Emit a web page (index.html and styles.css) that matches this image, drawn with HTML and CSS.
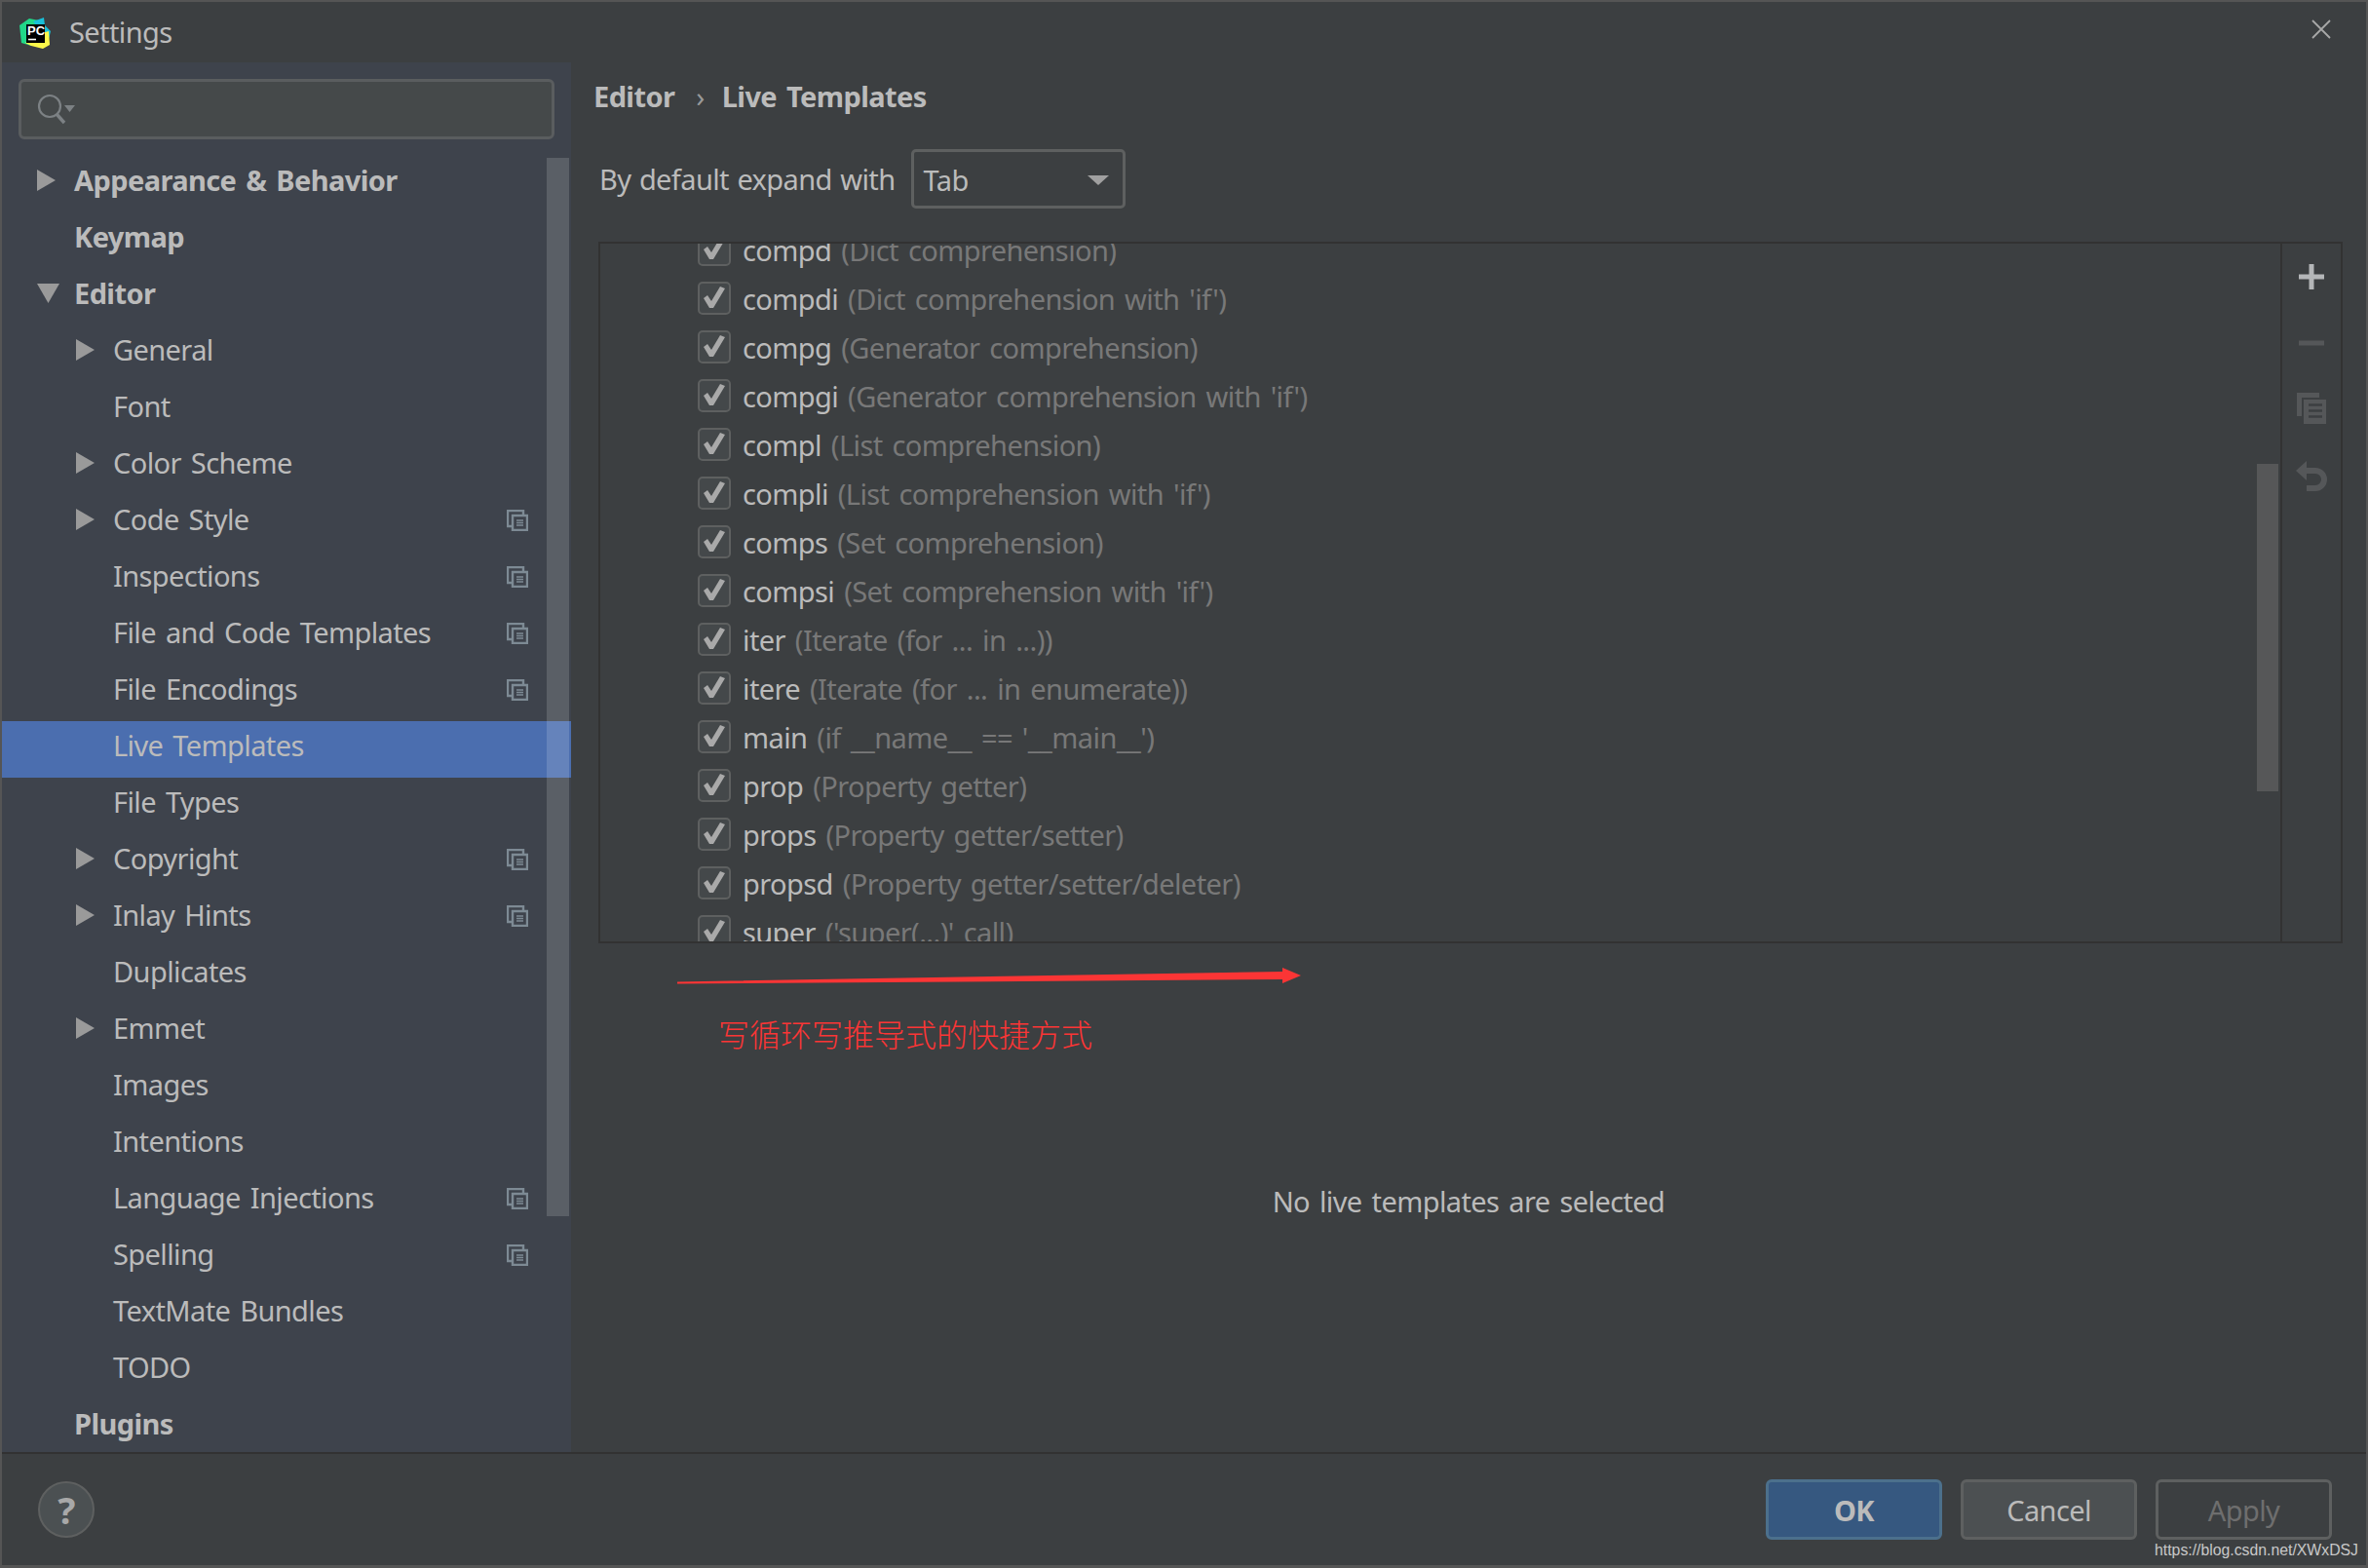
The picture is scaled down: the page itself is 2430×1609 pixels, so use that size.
FILE: index.html

```html
<!DOCTYPE html>
<html>
<head>
  <meta charset="UTF-8">
  <title>Settings</title>
  <link rel="stylesheet" href="styles.css">
</head>
<body>
  <svg class="defs" width="0" height="0">
    <symbol id="arrow-right" viewBox="0 0 19 22"><path d="M0 0L19 11L0 22Z"/></symbol>
    <symbol id="arrow-down" viewBox="0 0 23 20"><path d="M0 0H23L11.500 20Z"/></symbol>
    <symbol id="project" viewBox="0 0 22 22">
      <path d="M1 1H17V17H1Z" fill="none" stroke="#7d8a94" stroke-width="2.400"/>
      <path d="M6 6H21V21H6Z" fill="#3e434c" stroke="#7d8a94" stroke-width="2.400"/>
      <path d="M10 11H17M10 13.500H17M10 16H17" stroke="#7d8a94" stroke-width="1.500"/>
    </symbol>
    <symbol id="check" viewBox="2 2 30 30">
      <path d="M6 17L10 14L14 20L23 5L28 7L16 27H12Z" fill="#a9a9a9"/>
    </symbol>
  </svg>

  <div class="window">
    <header class="titlebar">
      <svg class="logo" viewBox="0 0 32 32" width="32" height="32">
        <path d="M0 8L10 1L20 3L24 14L12 29L2 26Z" fill="#21d789"/>
        <path d="M14 4L25 0L26 8L32 14L30 22L22 14Z" fill="#19bfd8"/>
        <path d="M6 26L12 29L24 32L31 28L30 14L16 18Z" fill="#fcf84a"/>
        <path d="M7 7H26V26H7Z" fill="#000"/>
        <text class="logo-text" x="8" y="18">PC</text>
        <path d="M9 22.500H17" stroke="#fff" stroke-width="1.600"/>
      </svg>
      <span class="title">Settings</span>
      <svg class="close" viewBox="0 0 20 20" width="20" height="20">
        <path d="M1 1L19 19M19 1L1 19" stroke="#a8a8a8" stroke-width="1.800"/>
      </svg>
    </header>

    <main class="main">
      <aside class="sidebar">
        <div class="search">
          <svg viewBox="0 0 40 32" width="40" height="32">
            <circle cx="13" cy="13" r="11" fill="none" stroke="#7c8184" stroke-width="2.200"/>
            <path d="M20 21L28 30" stroke="#7c8184" stroke-width="3.400"/>
            <path d="M28 12H39L33.500 19Z" fill="#7c8184"/>
          </svg>
        </div>
        <div class="tree">
          <div class="node bold"><svg class="arrow"><use href="#arrow-right"/></svg>Appearance &amp; Behavior</div>
          <div class="node bold">Keymap</div>
          <div class="node bold"><svg class="arrow down"><use href="#arrow-down"/></svg>Editor</div>
          <div class="node sub"><svg class="arrow"><use href="#arrow-right"/></svg>General</div>
          <div class="node sub">Font</div>
          <div class="node sub"><svg class="arrow"><use href="#arrow-right"/></svg>Color Scheme</div>
          <div class="node sub"><svg class="arrow"><use href="#arrow-right"/></svg>Code Style<svg class="proj"><use href="#project"/></svg></div>
          <div class="node sub">Inspections<svg class="proj"><use href="#project"/></svg></div>
          <div class="node sub">File and Code Templates<svg class="proj"><use href="#project"/></svg></div>
          <div class="node sub">File Encodings<svg class="proj"><use href="#project"/></svg></div>
          <div class="node sub selected">Live Templates</div>
          <div class="node sub">File Types</div>
          <div class="node sub"><svg class="arrow"><use href="#arrow-right"/></svg>Copyright<svg class="proj"><use href="#project"/></svg></div>
          <div class="node sub"><svg class="arrow"><use href="#arrow-right"/></svg>Inlay Hints<svg class="proj"><use href="#project"/></svg></div>
          <div class="node sub">Duplicates</div>
          <div class="node sub"><svg class="arrow"><use href="#arrow-right"/></svg>Emmet</div>
          <div class="node sub">Images</div>
          <div class="node sub">Intentions</div>
          <div class="node sub">Language Injections<svg class="proj"><use href="#project"/></svg></div>
          <div class="node sub">Spelling<svg class="proj"><use href="#project"/></svg></div>
          <div class="node sub">TextMate Bundles</div>
          <div class="node sub">TODO</div>
          <div class="node bold">Plugins</div>
        </div>
        <div class="side-scroll"></div>
      </aside>

      <section class="content">
        <div class="crumbs"><b>Editor</b><span class="sep">›</span><b>Live Templates</b></div>
        <div class="expand">
          <span class="expand-label">By default expand with</span>
          <div class="combo">Tab<i class="caret"></i></div>
        </div>

        <div class="listbox">
          <div class="rows">
            <div class="row"><span class="box"><svg><use href="#check"/></svg></span>compd <em>(Dict comprehension)</em></div>
            <div class="row"><span class="box"><svg><use href="#check"/></svg></span>compdi <em>(Dict comprehension with 'if')</em></div>
            <div class="row"><span class="box"><svg><use href="#check"/></svg></span>compg <em>(Generator comprehension)</em></div>
            <div class="row"><span class="box"><svg><use href="#check"/></svg></span>compgi <em>(Generator comprehension with 'if')</em></div>
            <div class="row"><span class="box"><svg><use href="#check"/></svg></span>compl <em>(List comprehension)</em></div>
            <div class="row"><span class="box"><svg><use href="#check"/></svg></span>compli <em>(List comprehension with 'if')</em></div>
            <div class="row"><span class="box"><svg><use href="#check"/></svg></span>comps <em>(Set comprehension)</em></div>
            <div class="row"><span class="box"><svg><use href="#check"/></svg></span>compsi <em>(Set comprehension with 'if')</em></div>
            <div class="row"><span class="box"><svg><use href="#check"/></svg></span>iter <em>(Iterate (for ... in ...))</em></div>
            <div class="row"><span class="box"><svg><use href="#check"/></svg></span>itere <em>(Iterate (for ... in enumerate))</em></div>
            <div class="row"><span class="box"><svg><use href="#check"/></svg></span>main <em>(if __name__ == '__main__')</em></div>
            <div class="row"><span class="box"><svg><use href="#check"/></svg></span>prop <em>(Property getter)</em></div>
            <div class="row"><span class="box"><svg><use href="#check"/></svg></span>props <em>(Property getter/setter)</em></div>
            <div class="row"><span class="box"><svg><use href="#check"/></svg></span>propsd <em>(Property getter/setter/deleter)</em></div>
            <div class="row"><span class="box"><svg><use href="#check"/></svg></span>super <em>('super(...)' call)</em></div>
          </div>
          <div class="list-scroll"></div>
          <div class="toolbar">
            <svg viewBox="0 0 26 26" width="26" height="26"><path d="M10.500 0H15.500V10.500H26V15.500H15.500V26H10.500V15.500H0V10.500H10.500Z" fill="#b4b6b8"/></svg>
            <svg class="minus" viewBox="0 0 26 26" width="26" height="26"><path d="M0 10.500H26V15.500H0Z" fill="#555759"/></svg>
            <svg viewBox="0 0 30 32" width="30" height="32">
              <path d="M0 0H23V5H5V24H0Z" fill="#555759"/>
              <path d="M7 7H30V32H7Z" fill="#555759"/>
              <path d="M12 12.500H26M12 18.500H26M12 24.500H26" stroke="#3c3f41" stroke-width="2.500"/>
            </svg>
            <svg viewBox="0 0 33 32" width="33" height="32">
              <path d="M0 10L11 0V20Z" fill="#555759"/>
              <path d="M9 10H20A9 9 0 0 1 20 28H11" fill="none" stroke="#555759" stroke-width="6"/>
            </svg>
          </div>
        </div>

        <div class="empty">No live templates are selected</div>

        <svg class="red-arrow" viewBox="0 0 640 18" width="640" height="18">
          <path d="M0 14.500L621 4V0L640 8L621 16V12L0 16.500Z" fill="#fb3535"/>
        </svg>
        <div class="note">写循环写推导式的快捷方式</div>
      </section>
    </main>

    <footer class="footer">
      <div class="help">?</div>
      <div class="buttons">
        <div class="btn primary">OK</div>
        <div class="btn">Cancel</div>
        <div class="btn off">Apply</div>
      </div>
      <div class="watermark">https://blog.csdn.net/XWxDSJ</div>
    </footer>
  </div>
</body>
</html>
```

FILE: styles.css

```css
html, body {
  margin: 0;
  padding: 0;
}
body {
  width: 2430px;
  height: 1609px;
  overflow: hidden;
  font-family: "Noto Sans", sans-serif;
  font-size: 29px;
  letter-spacing: -0.6px;
  word-spacing: 3px;
  color: #bbbbbb;
  background-color: #3c3f41;
}
.defs {
  position: absolute;
}
.window {
  height: 1609px;
  box-sizing: border-box;
  display: flex;
  flex-direction: column;
  border: 2px solid #555555;
  border-bottom-width: 3px;
  background-color: #3c3f41;
}

/* title bar */
.titlebar {
  height: 62px;
  flex: none;
  display: flex;
  align-items: center;
  padding: 0 36px 0 18px;
}
.logo {
  margin-top: 2px;
}
.logo-text {
  font-family: "Liberation Sans", sans-serif;
  font-weight: bold;
  font-size: 13px;
  letter-spacing: 0;
  fill: #fff;
}
.title {
  margin-left: 19px;
  margin-top: -1px;
}
.close {
  margin-left: auto;
  margin-top: -6px;
}

.main {
  flex: 1;
  display: flex;
  min-height: 0;
}

/* left tree */
.sidebar {
  width: 584px;
  flex: none;
  position: relative;
  background-color: #3e434c;
}
.search {
  height: 62px;
  margin: 17px 17px 17px 17px;
  box-sizing: border-box;
  display: flex;
  align-items: center;
  padding-left: 16px;
  background-color: #45494a;
  border: 3px solid #5a5d5f;
  border-radius: 6px;
}
.node {
  height: 58px;
  box-sizing: border-box;
  display: flex;
  align-items: center;
  position: relative;
  padding-left: 74px;
  padding-bottom: 10px;
}
.node.sub {
  padding-left: 114px;
}
.node.bold {
  font-weight: bold;
}
.node.selected {
  background-color: #4b6eaf;
}
.arrow {
  position: absolute;
  left: 36px;
  top: 14px;
  width: 19px;
  height: 22px;
  fill: #9a9a9a;
}
.arrow.down {
  width: 23px;
  height: 20px;
  top: 15px;
}
.sub .arrow {
  left: 76px;
}
.proj {
  position: absolute;
  left: 518px;
  top: 15px;
  width: 22px;
  height: 22px;
}
.side-scroll {
  position: absolute;
  left: 559px;
  top: 98px;
  width: 23px;
  height: 1086px;
  background-color: rgba(255, 255, 255, 0.15);
}

/* right part */
.content {
  flex: 1;
  position: relative;
  display: flex;
  flex-direction: column;
}
.crumbs {
  height: 72px;
  box-sizing: border-box;
  display: flex;
  align-items: center;
  padding-left: 23px;
  padding-bottom: 3px;
}
.sep {
  margin: 0 18px 0 22px;
  color: #999999;
}
.expand {
  height: 61px;
  margin-top: 17px;
  display: flex;
  align-items: center;
  padding-left: 29px;
}
.expand-label {
  word-spacing: 1.500px;
}
.combo {
  width: 220px;
  height: 61px;
  margin-left: 16px;
  box-sizing: border-box;
  display: flex;
  align-items: center;
  padding: 2px 14px 0 10px;
  border: 3px solid #5e6060;
  border-radius: 5px;
}
.caret {
  margin-left: auto;
  border-left: 11px solid transparent;
  border-right: 11px solid transparent;
  border-top: 10px solid #a0a0a0;
}
.listbox {
  height: 720px;
  width: 1790px;
  margin: 34px 0 0 28px;
  flex: none;
  box-sizing: border-box;
  position: relative;
  display: flex;
  overflow: hidden;
  border: 2px solid #323232;
}
.rows {
  flex: 1;
  margin-top: -19px;
  padding-left: 100px;
}
.row {
  height: 50px;
  display: flex;
  align-items: center;
  white-space: pre;
}
.row em {
  font-style: normal;
  color: #787878;
}
.box {
  width: 34px;
  height: 34px;
  margin-right: 12px;
  box-sizing: border-box;
  background-color: #44484a;
  border: 2px solid #5e6060;
  border-radius: 5px;
  display: block;
}
.box svg {
  display: block;
  width: 30px;
  height: 30px;
}
.list-scroll {
  position: absolute;
  left: 1700px;
  top: 226px;
  width: 22px;
  height: 336px;
  background-color: #565758;
}
.toolbar {
  width: 60px;
  flex: none;
  border-left: 2px solid #323232;
  display: flex;
  flex-direction: column;
  align-items: center;
  gap: 38px;
  padding-top: 21px;
}
.minus {
  margin-top: 4px;
}
.empty {
  flex: 1;
  display: flex;
  align-items: center;
  justify-content: center;
  padding-top: 7px;
}
.red-arrow {
  position: absolute;
  left: 109px;
  top: 929px;
}
.note {
  position: absolute;
  left: 151px;
  top: 973px;
  font-family: "Noto Sans CJK SC", sans-serif;
  font-size: 32px;
  font-weight: 300;
  letter-spacing: 0;
  color: #fb3535;
}

/* bottom bar */
.footer {
  height: 116px;
  flex: none;
  box-sizing: border-box;
  position: relative;
  display: flex;
  align-items: center;
  justify-content: space-between;
  padding: 0 35px 0 37px;
  border-top: 2px solid #323232;
}
.help {
  width: 58px;
  height: 58px;
  box-sizing: border-box;
  display: flex;
  align-items: center;
  justify-content: center;
  border-radius: 50%;
  border: 2px solid #5e6060;
  background-color: #4b5052;
  font-weight: bold;
  font-size: 38px;
  color: #a8a8a8;
}
.buttons {
  display: flex;
  gap: 19px;
}
.btn {
  width: 181px;
  height: 62px;
  box-sizing: border-box;
  display: flex;
  align-items: center;
  justify-content: center;
  background-color: #4c5052;
  border: 3px solid #5e6060;
  border-radius: 6px;
}
.btn.primary {
  background-color: #365880;
  border-color: #4c708c;
  font-weight: bold;
}
.btn.off {
  background-color: #3c3f41;
  color: #6e6e6e;
}
.watermark {
  position: absolute;
  right: 8px;
  bottom: 6px;
  font-family: "Liberation Sans", sans-serif;
  font-size: 15.800px;
  letter-spacing: 0;
  word-spacing: 0;
  color: #c8c8c8;
}
```
